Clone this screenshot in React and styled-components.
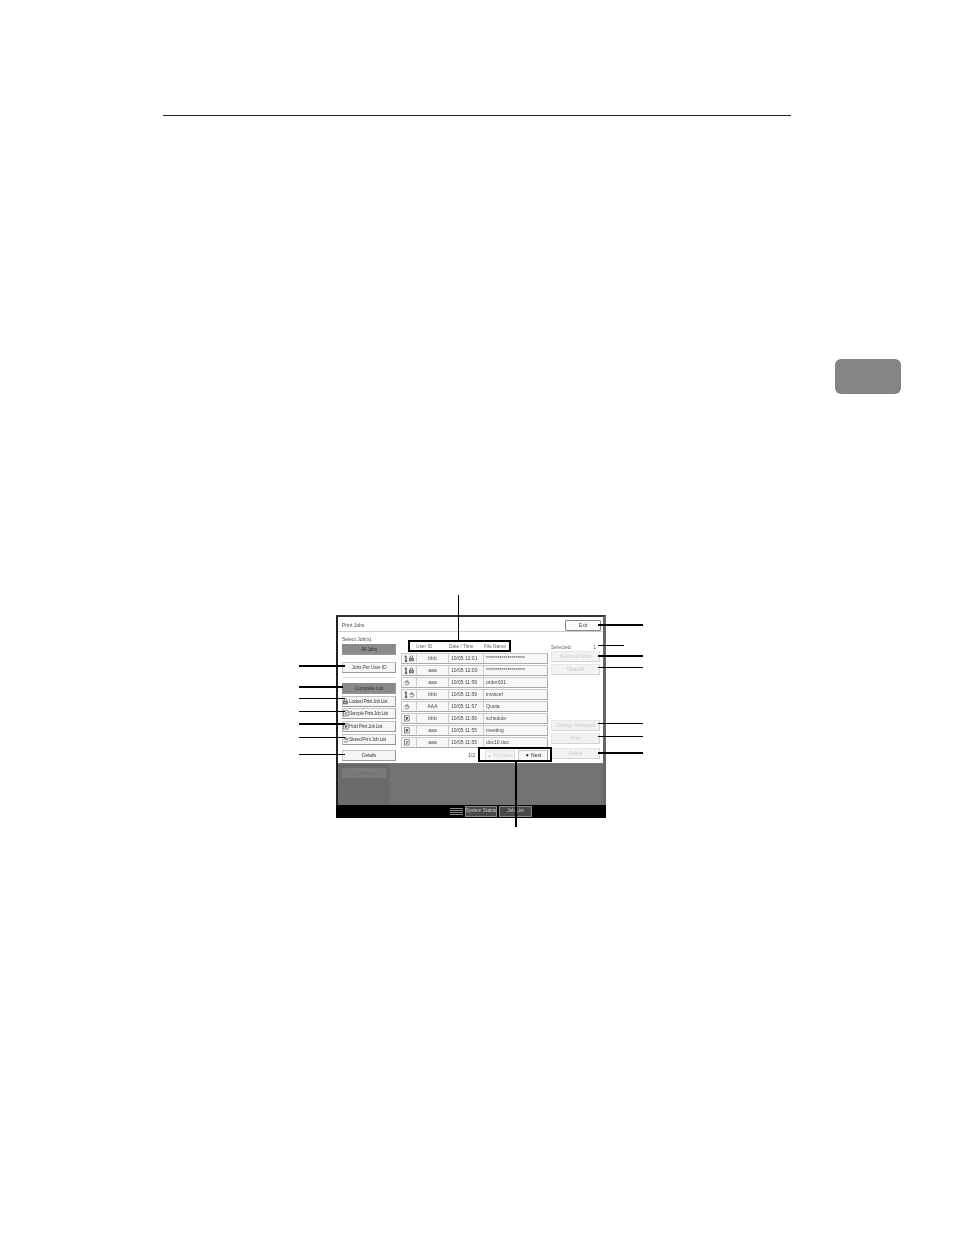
import styled, { createGlobalStyle } from "styled-components"

const GlobalStyle = createGlobalStyle`
  html, body {
    margin: 0;
    padding: 0;
    background: #fff;
  }
`

const jobs = [
  { icon: "personLock", user: "bbb", time: "10/05 12:01", name: "********************" },
  { icon: "personLock", user: "aaa", time: "10/05 12:00", name: "********************" },
  { icon: "stored", user: "aaa", time: "10/05 11:59", name: "order001" },
  { icon: "personStored", user: "bbb", time: "10/05 11:59", name: "invoicef" },
  { icon: "stored", user: "AAA", time: "10/05 11:57", name: "Quota" },
  { icon: "hold", user: "bbb", time: "10/05 11:56", name: "schedule" },
  { icon: "hold", user: "aaa", time: "10/05 11:55", name: "meeting" },
  { icon: "sample", user: "aaa", time: "10/05 11:55", name: "doc10.doc" },
]

const listButtons = [
  { icon: "lock", label: "Locked Print Job List", top: 2 },
  { icon: "sample", label: "Sample Print Job List", top: 1 },
  { icon: "hold", label: "Hold Print Job List", top: 2 },
  { icon: "stored", label: "Stored Print Job List", top: 2 },
]

// leader lines, relative to the panel's top left corner
const leaders = [
  { x: -37, y: 50, w: 46, h: 2 },
  { x: -37, y: 71, w: 44, h: 2 },
  { x: -37, y: 83, w: 46, h: 1 },
  { x: -37, y: 96, w: 46, h: 1 },
  { x: -37, y: 108, w: 46, h: 2 },
  { x: -37, y: 122, w: 46, h: 1 },
  { x: -37, y: 139, w: 46, h: 1 },
  { x: 262, y: 9, w: 45, h: 2 },
  { x: 262, y: 30, w: 26, h: 1 },
  { x: 262, y: 40, w: 45, h: 2 },
  { x: 262, y: 52, w: 45, h: 1 },
  { x: 262, y: 108, w: 45, h: 1 },
  { x: 262, y: 121, w: 45, h: 1 },
  { x: 262, y: 137, w: 45, h: 2 },
  { x: 122, y: -20, w: 1, h: 45 },
  { x: 179, y: 147, w: 2, h: 65 },
]

function Glyph({ kind }) {
  const person = kind === "personLock" || kind === "personStored"
  const lock = kind === "personLock" || kind === "lock"
  const stored = kind === "personStored" || kind === "stored"
  const shift = person ? "translate(5 0.5)" : "translate(0 0.5)"
  return (
    <svg width="11" height="7" viewBox="0 0 11 7" fill="none" stroke="#444" strokeWidth="0.6">
      {person && (
        <path d="M0.8 1.6 L2 0.8 V6 M0.8 6.2 H3.2" strokeWidth="1" stroke="#222" />
      )}
      {lock && (
        <g transform={shift}>
          <path d="M1.2 2.6 V1.5 A1.2 1.2 0 0 1 3.6 1.5 V2.6" />
          <rect x="0.5" y="2.6" width="3.8" height="2.8" fill="#999" />
        </g>
      )}
      {stored && (
        <g transform={shift}>
          <path d="M1 3.8 A2 2 0 1 1 3 5.4 H0.8" />
          <path d="M2 1.8 H4 M2 3 H3.6" strokeWidth="0.5" />
        </g>
      )}
      {kind === "hold" && (
        <g transform={shift}>
          <rect x="0.5" y="0.3" width="4.6" height="5.2" fill="#fff" />
          <path d="M1.8 2 H4 M1.8 3 H4 M1.8 4 H3.4" strokeWidth="0.7" stroke="#222" />
        </g>
      )}
      {kind === "sample" && (
        <g transform={shift}>
          <rect x="0.5" y="0.3" width="4.6" height="5.2" fill="#fff" />
          <path d="M1.9 1.8 H3.8 V2.9 H2 V4.2 H3.8" strokeWidth="0.5" />
        </g>
      )}
    </svg>
  )
}

function App() {
  return (
    <Page>
      <GlobalStyle />
      <TopRule />
      <ChapterTab />

      <Figure>
        <Panel>
          <Screen>
            <TitleBar>
              <span>Print Jobs</span>
              <ExitButton>Exit</ExitButton>
            </TitleBar>

            <Body>
              <LeftColumn>
                <Caption>Select Job(s).</Caption>
                <Button $active>All Jobs</Button>
                <Button $top={7}>Jobs Per User ID</Button>
                <Divider />
                <Button $active $top={5}>Complete List</Button>
                {listButtons.map((item) => (
                  <Button key={item.label} $top={item.top} $list>
                    <Glyph kind={item.icon} />
                    {item.label}
                  </Button>
                ))}
                <Button $top={5}>Details</Button>
              </LeftColumn>

              <MiddleColumn>
                <ListHeader>
                  <span>User ID</span>
                  <span>Date / Time</span>
                  <span>File Name</span>
                </ListHeader>
                <Rows>
                  {jobs.map((job) => (
                    <Row key={job.time + job.name}>
                      <IconCell><Glyph kind={job.icon} /></IconCell>
                      <UserCell>{job.user}</UserCell>
                      <Cell>{job.time}</Cell>
                      <Cell>{job.name}</Cell>
                    </Row>
                  ))}
                </Rows>
                <Pager>
                  <PageCount>1/2</PageCount>
                  <PagerButton $disabled>▲ Previous</PagerButton>
                  <PagerButton>▼ Next</PagerButton>
                </Pager>
              </MiddleColumn>

              <RightColumn>
                <SelectedRow>
                  <span>Selected:</span>
                  <span>1</span>
                </SelectedRow>
                <DisabledButton>Select All Jobs</DisabledButton>
                <DisabledButton $top={2}>Clear All</DisabledButton>
                <DisabledButton $top={45}>Change Password</DisabledButton>
                <DisabledButton $top={2}>Print</DisabledButton>
                <DisabledButton $top={4}>Delete</DisabledButton>
              </RightColumn>
            </Body>

            <GreyArea>
              <GreySide>
                <JobReset>Job Reset</JobReset>
              </GreySide>
            </GreyArea>
          </Screen>

          <StatusBar>
            <Dots />
            <StatusButton $width={32}>System Status</StatusButton>
            <StatusButton $width={33}>Job List</StatusButton>
          </StatusBar>
        </Panel>

        {leaders.map((l) => (
          <Leader
            key={`${l.x}-${l.y}`}
            style={{ left: l.x, top: l.y, width: l.w, height: l.h }}
          />
        ))}
        <HeaderCallout />
        <PagerCallout />
      </Figure>
    </Page>
  )
}

export default App

const Page = styled.div`
width : 954px;
height : 1235px;
overflow : hidden;
background : #fff;
display : flow-root;
font-family : "Liberation Sans", Arial, sans-serif;
`

const TopRule = styled.div`
height : 1px;
margin : 115px 163px 0 163px;
background : #222;
`

const ChapterTab = styled.div`
width : 66px;
height : 35px;
margin : 243px 0 0 835px;
border-radius : 6px;
background : #848484;
`

const Figure = styled.div`
position : relative;
width : 270px;
height : 203px;
margin : 221px 0 0 336px;
`

const Panel = styled.div`
width : 270px;
height : 203px;
display : flex;
flex-direction : column;
color : #4a4a4a;
font-size : 5px;
line-height : 1;
filter : blur(0.3px);
`

const Screen = styled.div`
flex : 1;
min-height : 0;
display : flex;
flex-direction : column;
border-top : 2px solid #333;
border-left : 2px solid #222;
border-right : 3px solid #666;
background : #fff;
`

const TitleBar = styled.div`
height : 15px;
flex : none;
box-sizing : border-box;
display : flex;
align-items : center;
justify-content : space-between;
padding : 3px 2px 0 4px;
border-bottom : 1px solid #ccc;
`

const ExitButton = styled.div`
width : 36px;
height : 11px;
box-sizing : border-box;
display : flex;
align-items : center;
justify-content : center;
border : 1px solid #888;
border-right-width : 1.5px;
border-bottom-width : 1.5px;
border-radius : 1px;
background : #fafafa;
`

const Body = styled.div`
height : 131px;
flex : none;
display : grid;
grid-template-columns : 59px 150px 49px;
padding-left : 4px;
overflow : hidden;
`

const LeftColumn = styled.div`
display : flex;
flex-direction : column;
padding : 2px 5px 0 0;
`

const Caption = styled.div`
height : 10px;
display : flex;
align-items : center;
`

const Button = styled.div`
height : 11px;
flex : none;
box-sizing : border-box;
margin-top : ${(p) => p.$top || 0}px;
display : flex;
align-items : center;
justify-content : ${(p) => (p.$list ? "flex-start" : "center")};
border : 1px solid ${(p) => (p.$active ? "#8a8a8a" : "#c4c4c4")};
border-right-color : #999;
border-bottom-color : #999;
background : ${(p) => (p.$active ? "#8a8a8a" : "#f6f6f6")};
color : ${(p) => (p.$active ? "#333" : "#4a4a4a")};
font-size : 5px;
letter-spacing : ${(p) => (p.$list ? "-0.4px" : "-0.2px")};
white-space : nowrap;
svg {
  flex : none;
  margin-right : -5px;
}
`

const Divider = styled.div`
height : 1px;
margin-top : 4px;
background : #ddd;
`

const MiddleColumn = styled.div`
display : flex;
flex-direction : column;
padding-right : 3px;
`

const ListHeader = styled.div`
height : 12px;
margin-top : 9px;
display : grid;
grid-template-columns : 33px 35px 1fr;
padding-left : 15px;
align-items : center;
font-size : 4.8px;
color : #666;
`

const Rows = styled.div`
display : flex;
flex-direction : column;
gap : 1px;
`

const Row = styled.div`
height : 11px;
box-sizing : border-box;
display : grid;
grid-template-columns : 14px 32px 35px 1fr;
align-items : center;
border : 1px solid #c8c8c8;
border-right-color : #aaa;
border-bottom-color : #aaa;
background : #f7f7f7;
white-space : nowrap;
`

const IconCell = styled.div`
height : 100%;
display : flex;
align-items : center;
padding-left : 2px;
overflow : hidden;
`

const Cell = styled.div`
height : 100%;
display : flex;
align-items : center;
padding-left : 2px;
border-left : 1px solid #ccc;
overflow : hidden;
`

const UserCell = styled.div`
height : 100%;
display : flex;
align-items : center;
justify-content : center;
border-left : 1px solid #ccc;
`

const Pager = styled.div`
display : flex;
justify-content : flex-end;
align-items : center;
gap : 3px;
margin-top : 2px;
height : 11px;
`

const PageCount = styled.span`
margin-right : 7px;
`

const PagerButton = styled.div`
width : 30px;
height : 11px;
box-sizing : border-box;
display : flex;
align-items : center;
justify-content : center;
border : 1px solid ${(p) => (p.$disabled ? "#e2e2e2" : "#c4c4c4")};
border-right-color : ${(p) => (p.$disabled ? "#d4d4d4" : "#999")};
border-bottom-color : ${(p) => (p.$disabled ? "#d4d4d4" : "#999")};
background : ${(p) => (p.$disabled ? "#f4f4f4" : "#f8f8f8")};
color : ${(p) => (p.$disabled ? "#d0d0d0" : "#222")};
white-space : nowrap;
`

const RightColumn = styled.div`
display : flex;
flex-direction : column;
padding-top : 11px;
`

const SelectedRow = styled.div`
height : 8px;
display : flex;
align-items : center;
justify-content : space-between;
padding-right : 4px;
color : #666;
`

const DisabledButton = styled.div`
height : 11px;
flex : none;
box-sizing : border-box;
margin-top : ${(p) => p.$top || 0}px;
display : flex;
align-items : center;
justify-content : center;
border : 1px solid #e8e8e8;
border-right-color : #d4d4d4;
border-bottom-color : #d4d4d4;
background : #f2f2f2;
color : #ccc;
letter-spacing : -0.1px;
white-space : nowrap;
`

const GreyArea = styled.div`
flex : 1;
display : flex;
border-top : 1px solid #777;
background : #727272;
`

const GreySide = styled.div`
width : 52px;
box-sizing : border-box;
padding : 4px 0 0 4px;
background : #6b6b6b;
`

const JobReset = styled.div`
width : 44px;
height : 10px;
display : flex;
align-items : center;
justify-content : center;
background : #7a7a7a;
color : #707070;
`

const StatusBar = styled.div`
height : 13px;
flex : none;
box-sizing : border-box;
display : flex;
align-items : center;
gap : 2px;
padding-left : 114px;
background : #000;
color : #ccc;
font-size : 4.8px;
`

const Dots = styled.div`
width : 13px;
height : 8px;
background : repeating-linear-gradient(to bottom, #888 0 1px, #000 1px 2px);
`

const StatusButton = styled.div`
width : ${(p) => p.$width}px;
height : 11px;
box-sizing : border-box;
display : flex;
align-items : center;
justify-content : center;
border : 1px solid #888;
background : #4a4a4a;
white-space : nowrap;
`

const Leader = styled.div`
position : absolute;
background : #000;
`

const HeaderCallout = styled.div`
position : absolute;
left : 72px;
top : 25px;
width : 103px;
height : 12px;
box-sizing : border-box;
border : 2px solid #000;
`

const PagerCallout = styled.div`
position : absolute;
left : 142px;
top : 132px;
width : 74px;
height : 15px;
box-sizing : border-box;
border : 2px solid #000;
`
